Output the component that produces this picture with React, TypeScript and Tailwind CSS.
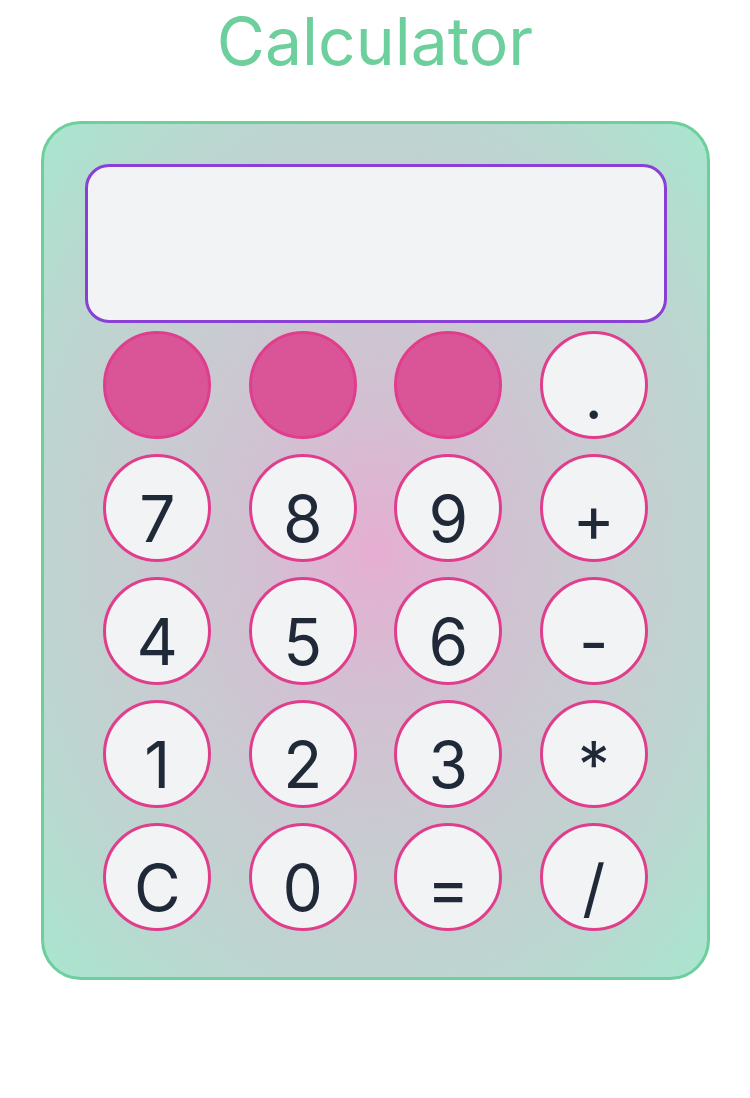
const keys: { label: string; filled?: boolean }[] = [
  { label: "", filled: true },
  { label: "", filled: true },
  { label: "", filled: true },
  { label: "." },
  { label: "7" },
  { label: "8" },
  { label: "9" },
  { label: "+" },
  { label: "4" },
  { label: "5" },
  { label: "6" },
  { label: "-" },
  { label: "1" },
  { label: "2" },
  { label: "3" },
  { label: "*" },
  { label: "C" },
  { label: "0" },
  { label: "=" },
  { label: "/" },
];

const App = () => {
  return (
    <div className="min-h-screen bg-white flex flex-col items-center font-['Inter','Liberation_Sans',sans-serif]">
      {/* Title */}
      <h1 className="mt-[2px] text-[66px] leading-[78px] text-[#6ccf9c] font-normal">
        Calculator
      </h1>

      {/* Calculator body */}
      <div className="mt-[41px] w-[669px] rounded-[40px] border-[3px] border-[#6ccf9c] pt-[40px] pb-[46px] pl-[41px] pr-[40px] bg-[radial-gradient(ellipse_at_center,#e6aed2_0%,#d2c0d2_25%,#c8ccd1_50%,#bcd6d0_75%,#a8e6cf_100%)]">
        {/* Display */}
        <div className="h-[159px] w-full rounded-[24px] border-[3px] border-[#8a3fd6] bg-[#f2f3f5]" />

        {/* Keys */}
        <div className="mt-[8px] grid grid-cols-4 gap-y-[15px] justify-items-center">
          {keys.map((k, i) => (
            <button
              key={i}
              className={
                k.filled
                  ? "w-[108px] h-[108px] rounded-full border-[3px] border-[#e03e8c] bg-[#d95597]"
                  : "w-[108px] h-[108px] rounded-full border-[3px] border-[#e03e8c] bg-[#f2f3f5] flex items-center justify-center text-[#1f2937]"
              }
            >
              {k.label && (
                <span className="mt-[22px] block text-[64px] leading-[64px]">{k.label}</span>
              )}
            </button>
          ))}
        </div>
      </div>
    </div>
  );
};

export default App;
